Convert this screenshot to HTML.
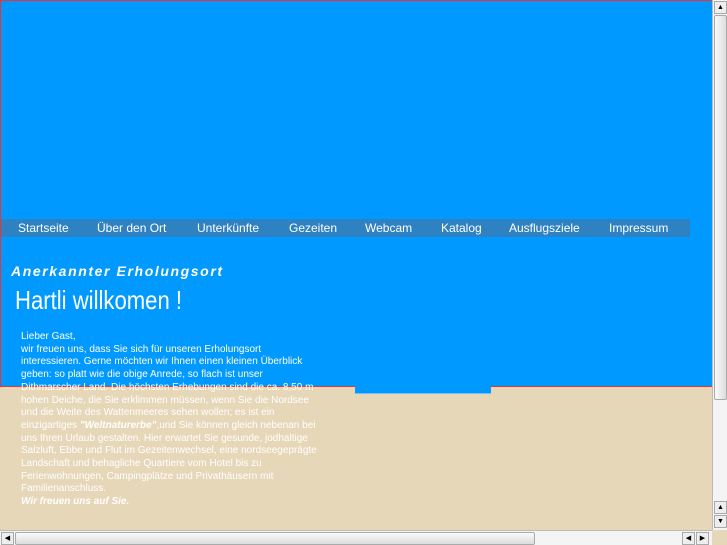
<!DOCTYPE html>
<html><head><meta charset="utf-8"><style>
*{margin:0;padding:0}
body{width:727px;height:545px;overflow:hidden;background:#e6d7b8;position:relative;font-family:"Liberation Sans",sans-serif}
.blue{position:absolute;left:0;top:0;width:712px;height:386px;background:#0099ff;border-top:1px solid #e33;border-left:1px solid #e33;box-sizing:border-box}
.redb{position:absolute;top:386px;height:1px;background:#e33}
.stub{position:absolute;left:355px;top:386px;width:136px;height:7px;background:#0099ff;border-bottom:1px solid #7bbcf0}
.nav{position:absolute;left:1px;top:219px;width:689px;height:18px;background:#2f82c2}
.nav span{position:absolute;top:2px;color:#fff;font-size:12px}
h1{position:absolute;left:11px;top:263px;font-size:14px;font-style:italic;font-weight:bold;color:#fff;letter-spacing:1.6px}
.hand{position:absolute;left:15px;top:285px;font-size:26px;color:#fff;font-family:"Liberation Sans Narrow","Liberation Sans",sans-serif;font-weight:normal;transform:scaleX(.85);transform-origin:left}
.txt{position:absolute;left:21px;top:331px;width:330px;white-space:nowrap;font-size:10px;line-height:12.7px;color:#fff;letter-spacing:0}
.vs{position:absolute;left:712px;top:0;width:15px;height:530px;background:#f4f4f4;border-left:1px solid #bbb;box-sizing:border-box}
.hs{position:absolute;left:0;top:530px;width:712px;height:15px;background:#f4f4f4;border-top:1px solid #bbb;box-sizing:border-box}
.thumbv{position:absolute;left:1px;top:15px;width:13px;height:385px;background:linear-gradient(90deg,#fafafa,#ddd);border:1px solid #aaa;border-radius:2px;box-sizing:border-box}
.thumbh{position:absolute;left:15px;top:1px;width:520px;height:13px;background:linear-gradient(#fafafa,#ddd);border:1px solid #aaa;border-radius:2px;box-sizing:border-box}
.btn{position:absolute;width:13px;height:13px;background:#eee;border:1px solid #aaa;box-sizing:border-box;font-size:7px;line-height:11px;text-align:center;color:#000}
</style></head><body>
<div class="blue"></div>
<div class="redb" style="left:0;width:355px"></div>
<div class="redb" style="left:491px;width:221px"></div>
<div class="stub"></div>
<div class="nav">
<span style="left:17px">Startseite</span>
<span style="left:96px">Über den Ort</span>
<span style="left:196px">Unterkünfte</span>
<span style="left:288px">Gezeiten</span>
<span style="left:364px">Webcam</span>
<span style="left:440px">Katalog</span>
<span style="left:508px">Ausflugsziele</span>
<span style="left:608px">Impressum</span>
</div>
<h1>Anerkannter Erholungsort</h1>
<div class="hand">Hartli willkomen !</div>
<div class="txt">Lieber Gast,<br>wir freuen uns, dass Sie sich für unseren Erholungsort<br>interessieren. Gerne möchten wir Ihnen einen kleinen Überblick<br>geben: so platt wie die obige Anrede, so flach ist unser<br>Dithmarscher Land. Die höchsten Erhebungen sind die ca. 8,50 m<br>hohen Deiche, die Sie erklimmen müssen, wenn Sie die Nordsee<br>und die Weite des Wattenmeeres sehen wollen; es ist ein<br>einzigartiges <b><i>"Weltnaturerbe"</i></b>,und Sie können gleich nebenan bei<br>uns Ihren Urlaub gestalten. Hier erwartet Sie gesunde, jodhaltige<br>Salzluft, Ebbe und Flut im Gezeitenwechsel, eine nordseegeprägte<br>Landschaft und behagliche Quartiere vom Hotel bis zu<br>Ferienwohnungen, Campingplätze und Privathäusern mit<br>Familienanschluss.<br><b><i>Wir freuen uns auf Sie.</i></b></div>
<div class="vs"><div class="btn" style="left:1px;top:1px">▲</div><div class="thumbv"></div><div class="btn" style="left:1px;top:501px">▲</div><div class="btn" style="left:1px;top:515px">▼</div></div>
<div class="hs"><div class="btn" style="left:1px;top:1px">◀</div><div class="thumbh"></div><div class="btn" style="left:682px;top:1px">◀</div><div class="btn" style="left:696px;top:1px">▶</div></div>
</body></html>
